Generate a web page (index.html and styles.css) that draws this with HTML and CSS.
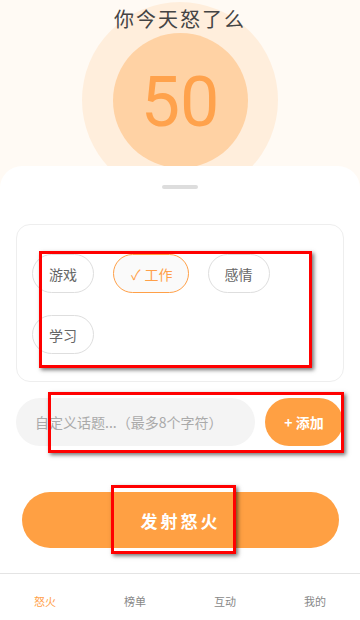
FILE: index.html
```html
<!DOCTYPE html>
<html lang="zh-CN">
<head>
    <meta charset="UTF-8">
    <meta name="viewport" content="width=device-width, initial-scale=1.0">
    <title>你今天怒了么</title>
    <link rel="stylesheet" href="styles.css">
</head>
<body>
    <div class="hero">
        <div class="ring">
            <div class="core">50</div>
        </div>
        <h1 class="title">你今天怒了么</h1>
    </div>

    <div class="sheet">
        <div class="handle"></div>

        <div class="topic-card">
            <div class="chips">
                <span class="chip">游戏</span>
                <span class="chip active"><span class="check">✓</span>工作</span>
                <span class="chip">感情</span>
                <span class="chip">学习</span>
            </div>
        </div>

        <div class="custom-row">
            <input class="custom-input" type="text" placeholder="自定义话题...（最多8个字符）">
            <button class="add-btn">+ 添加</button>
        </div>

        <button class="fire-btn">发射怒火</button>
    </div>

    <nav class="tabbar">
        <span class="tab active">怒火</span>
        <span class="tab">榜单</span>
        <span class="tab">互动</span>
        <span class="tab">我的</span>
    </nav>

    <!-- annotation boxes -->
    <div class="mark mark-chips"></div>
    <div class="mark mark-input"></div>
    <div class="mark mark-fire"></div>
</body>
</html>
```

FILE: styles.css
```css
* {
    box-sizing: border-box;
}
body {
    margin: 0;
    width: 360px;
    height: 620px;
    position: relative;
    display: flex;
    flex-direction: column;
    overflow: hidden;
    background: #fffaf4;
    font-family: "Noto Sans CJK SC", "Noto Sans", sans-serif;
}
.hero {
    height: 166px;
    flex: none;
    position: relative;
    overflow: hidden;
    display: flex;
    justify-content: center;
}
.ring {
    width: 196px;
    height: 196px;
    margin-top: 2px;
    border-radius: 50%;
    background: #ffeedc;
    display: flex;
    align-items: center;
    justify-content: center;
    flex: none;
}
.core {
    width: 135px;
    height: 135px;
    border-radius: 50%;
    background: #ffd2a4;
    color: #ffa24c;
    font-family: Roboto, sans-serif;
    font-size: 70px;
    line-height: 1;
    display: flex;
    align-items: center;
    justify-content: center;
    padding-top: 4px;
}
.title {
    position: absolute;
    top: 4px;
    left: 0;
    right: 0;
    margin: 0;
    text-align: center;
    font-size: 20px;
    font-weight: 400;
    letter-spacing: 2px;
    line-height: 30px;
    color: #444;
}
.sheet {
    flex: 1;
    background: #fff;
    border-radius: 22px 22px 0 0;
    display: flex;
    flex-direction: column;
}
.handle {
    width: 36px;
    height: 4px;
    border-radius: 2px;
    background: #ddd;
    margin: 19px auto 0;
}
.topic-card {
    margin: 35px 16px 0;
    border: 1px solid #eee;
    border-radius: 14px;
    padding: 29px 15px 27px;
}
.chips {
    display: flex;
    flex-wrap: wrap;
    column-gap: 19px;
    row-gap: 22px;
}
.chip {
    height: 39px;
    padding: 0 16px;
    border: 1px solid #dedede;
    border-radius: 20px;
    display: flex;
    align-items: center;
    font-size: 14px;
    color: #666;
}
.chip.active {
    border-color: #ffa048;
    color: #ffa048;
    background: #fafafa;
    padding: 0 15px 0 17px;
}
.check {
    margin-right: 4px;
}
.custom-row {
    display: flex;
    gap: 10px;
    margin: 16px 17px 0 16px;
}
.custom-input {
    flex: 1;
    height: 48px;
    border: none;
    border-radius: 24px;
    background: #f4f4f4;
    padding: 0 19px;
    font-family: inherit;
    font-size: 14px;
    color: #444;
    outline: none;
}
.custom-input::placeholder {
    color: #aaa;
}
.add-btn {
    width: 78px;
    height: 48px;
    border: none;
    border-radius: 24px;
    background: #ffa043;
    color: #fff;
    font-family: inherit;
    font-size: 14px;
    font-weight: 700;
}
.fire-btn {
    margin: 46px 21px 0 22px;
    height: 56px;
    border: none;
    border-radius: 28px;
    background: #ffa043;
    color: #fff;
    font-family: inherit;
    font-size: 17px;
    font-weight: 700;
    letter-spacing: 3px;
}
.tabbar {
    flex: none;
    height: 47px;
    border-top: 1px solid #e4e4e4;
    background: #fff;
    display: flex;
    padding-top: 7px;
}
.tab {
    flex: 1;
    display: flex;
    align-items: center;
    justify-content: center;
    font-size: 11px;
    color: #888;
}
.tab.active {
    color: #ffa048;
}
.mark {
    position: absolute;
    border: 3px solid #ff0000;
    box-shadow: 2px 2px 4px rgba(0, 0, 0, 0.55);
}
.mark-chips {
    left: 39px;
    top: 251px;
    width: 273px;
    height: 117px;
}
.mark-input {
    left: 48px;
    top: 392px;
    width: 296px;
    height: 61px;
}
.mark-fire {
    left: 111px;
    top: 485px;
    width: 125px;
    height: 69px;
}
```
